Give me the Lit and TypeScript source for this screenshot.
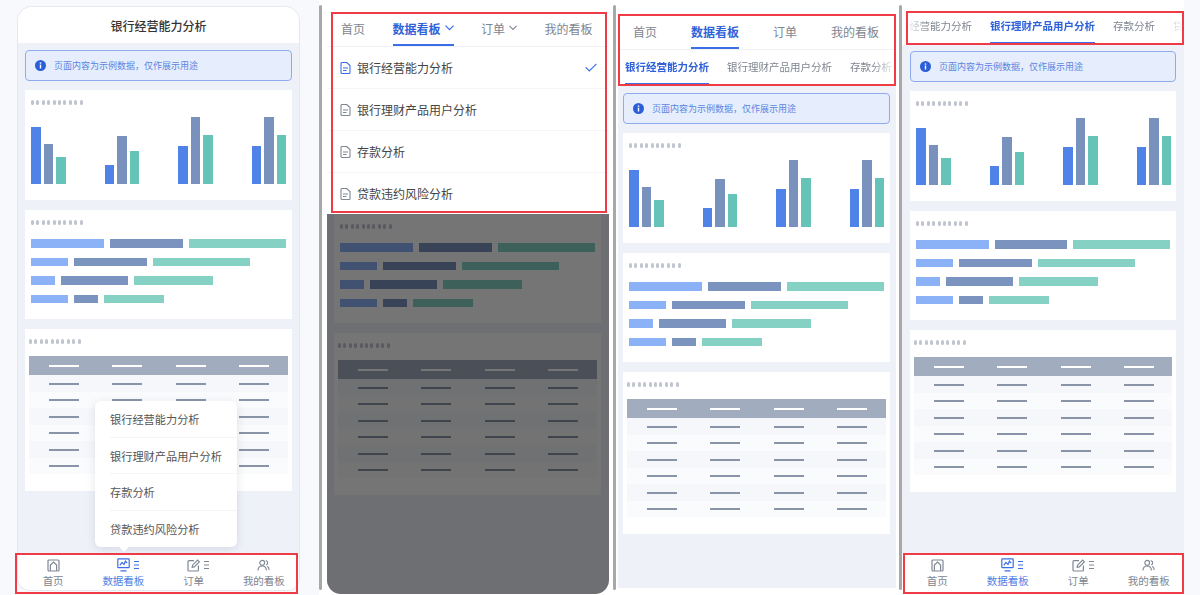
import { LitElement, html, css, svg } from "lit";
import { customElement } from "lit/decorators.js";

const GREY = "#7f8794";
const BLUE = "#3a6ee8";

const icons = {
  home: (c: string) => html`<svg width="13" height="13" viewBox="0 0 13 13" fill="none" stroke=${c} stroke-width="1.2"><rect x="1" y="1" width="11" height="11" rx="1"/><path d="M3.4 11.8V6L6.5 3l3.1 3v5.8"/></svg>`,
  data: (c: string) => html`<svg width="13" height="14" viewBox="0 0 13 14" fill="none" stroke=${c} stroke-width="1.2"><rect x=".8" y=".8" width="11.4" height="8.8" rx=".6"/><path d="M2.800 7.400l2.200-3 2 2 1.400-3.200 1.800 2"/><path d="M3.500 12.800h6"/></svg>`,
  edit: (c: string) => html`<svg width="13" height="13" viewBox="0 0 13 13" fill="none" stroke=${c} stroke-width="1.2"><path d="M7 1.600H2a1 1 0 0 0-1 1V11a1 1 0 0 0 1 1h8.400a1 1 0 0 0 1-1V6.400"/><path d="M5.200 8.200l.4-2L10.600 1.200l1.700 1.700-5 5z"/></svg>`,
  user: (c: string) => html`<svg width="14" height="13" viewBox="0 0 14 13" fill="none" stroke=${c} stroke-width="1.2"><circle cx="5.600" cy="3.600" r="2.600"/><path d="M1 11.800c.2-3 2.200-4.800 4.600-4.800s4.400 1.800 4.600 4.800"/><path d="M9.400 1.200c1.300.2 2.100 1.200 2.100 2.400 0 1.100-.6 2-1.600 2.300M11 7.400c1.200.7 2 2.200 2.100 4"/></svg>`,
  lines: (c: string) => html`<svg width="5" height="10" viewBox="0 0 5 10" stroke=${c} stroke-width="1"><path d="M0 1.500h5M0 5h5M0 8.500h5"/></svg>`,
  doc: (c: string) => html`<svg width="11" height="12" viewBox="0 0 11 12" fill="none" stroke=${c} stroke-width="1.100"><path d="M1 1.500a1 1 0 0 1 1-1h4.800L10 3.600V10.500a1 1 0 0 1-1 1H2a1 1 0 0 1-1-1z"/><path d="M3 6h5M3 8.500h3.500"/></svg>`,
  chevron: (c: string, w = 9) => html`<svg width=${w} height="6" viewBox="0 0 9 6" fill="none" stroke=${c} stroke-width="1.2"><path d="M.5.600l4 4 4-4"/></svg>`,
  check: (c: string) => html`<svg width="12" height="9" viewBox="0 0 12 9" fill="none" stroke=${c} stroke-width="1.100"><path d="M.6 4.200l3.700 3.700L11.400.8"/></svg>`,
  info: () => html`<svg width="11" height="11" viewBox="0 0 11 11">${svg`<circle cx="5.500" cy="5.500" r="5.500" fill="#2b5fd9"/><rect x="4.800" y="4.600" width="1.400" height="3.900" fill="#fff"/><circle cx="5.500" cy="3" r=".85" fill="#fff"/>`}</svg>`,
};

const GROUPS = [[57, 40, 27], [19, 48, 33], [38, 67, 49], [38, 67, 49]];
const ROWS = [[73, 73, 97], [36.5, 73, 97], [24, 67, 79], [36.5, 24, 60.5]];
const TABS = [
  { key: "home", label: "首页" },
  { key: "data", label: "数据看板", active: true, more: true },
  { key: "edit", label: "订单", more: true },
  { key: "user", label: "我的看板" },
];
const REPORTS = ["银行经营能力分析", "银行理财产品用户分析", "存款分析", "贷款违约风险分析"];
const RED = [
  [15, 553, 283, 41],
  [331, 12, 276, 201],
  [618, 14, 278, 72],
  [906, 11, 278, 34],
  [903, 553, 281, 41],
];

@customElement("app-root")
export class AppRoot extends LitElement {
  static styles = css`
    :host { display: block; position: relative; width: 1200px; height: 595px; overflow: hidden; background: #fff;
      font-family: "Noto Sans CJK SC", "Noto Sans", sans-serif; color: #333; }
    * { box-sizing: border-box; }
    .stage { display: flex; height: 595px; }
    .sep { width: 3px; height: 585px; margin-top: 5px; flex: none; background: #a8a8a8; border-radius: 2px; }
    .panel { flex: none; height: 595px; }
    .p1 { width: 319px; padding: 7px 0 0 18px; background: #f8f9fd; }
    .p2 { width: 291px; padding: 12px 0 0 5px; }
    .p3 { width: 283px; padding: 14px 0 0 2px; }
    .p4 { width: 298px; padding: 7px 0 0 0; background: linear-gradient(90deg, #fff 282px, #f8f9fd 282px); }
    .phone { position: relative; display: flex; flex-direction: column; overflow: hidden; background: #eef1f8; }
    .f1 { width: 281px; height: 583px; border-radius: 14px 14px 12px 12px; box-shadow: 0 0 0 1px #e6e8ef; }
    .f2 { width: 282px; height: 582px; border-radius: 0 0 14px 14px; }
    .f3 { width: 278px; height: 574px; }
    .f4 { width: 282px; height: 583px; border-radius: 14px 14px 12px 12px; }

    .title { height: 36px; flex: none; background: #fff; display: flex; align-items: center; justify-content: center;
      font-size: 12px; font-weight: 500; color: #333; }
    .content { flex: 1; display: flex; flex-direction: column; gap: 10px; padding: 7px 7px 0; min-height: 0; }
    .f3 .content { padding: 8px 6px 0 5px; }
    .f4 .content { padding: 6px 8px 0 8px; }
    .f2 .content { padding: 0 8px 0 7px; }
    .banner { height: 31px; flex: none; margin-bottom: -1px; display: flex; align-items: center; gap: 8px; padding-left: 9px;
      background: #e6eefd; border: 1px solid #8fabf0; border-radius: 4px; font-size: 9px; color: #5b84e0; }

    .card { flex: none; background: #fff; padding: 10px 6px 16px; }
    .dots { display: flex; gap: 2.4px; height: 5px; }
    .dots i { width: 3px; height: 5px; border-radius: 1.5px; background: #c1c5d0; }
    .chart { display: grid; grid-template-columns: repeat(4, 73.5px); height: 67px; margin-top: 12px; }
    .group { display: flex; align-items: flex-end; gap: 3px; }
    .group b { width: 9.5px; }
    .c0 { background: #4f83e8; }
    .c1 { background: #7892bd; }
    .c2 { background: #66c3b7; }
    .rows { display: flex; flex-direction: column; gap: 10.15px; margin-top: 14px; }
    .hrow { display: flex; gap: 6px; }
    .hrow b { height: 8.5px; }
    .h0 { background: #8bb1f6; }
    .h1 { background: #7b93bf; }
    .h2 { background: #85d2c5; }
    .tcard { padding: 10px 4px 17px; }
    .table { margin-top: 12px; }
    .tr { display: flex; height: 16.5px; padding-left: 20px; align-items: center; background: #fafbfd; }
    .tr:nth-child(even) { background: #f5f7fa; }
    .tr i { width: 30px; height: 2px; margin-right: 33.4px; background: #8a94a8; flex: none; }
    .tr.head { height: 19px; background: #a2acbf; }
    .tr.head i { background: #fff; }

    .bottom { flex: none; height: 37px; display: flex; background: #fff; }
    .tab { flex: 1; display: flex; flex-direction: column; align-items: center; font-size: 10.5px; color: #7e8590; line-height: 15px; padding-top: 4px; }
    .tab.on { color: #4f7fe6; }
    .tab .ic { position: relative; width: 13px; height: 16px; display: flex; align-items: center; }
    .tab .more { position: absolute; left: 17px; top: 3px; display: flex; }

    .pop { position: absolute; left: 77px; top: 394px; width: 142px; height: 146px; background: #fff; border-radius: 6px;
      box-shadow: 0 2px 10px rgba(60, 70, 100, .14); padding-left: 15px; font-size: 11.2px; color: #555; }
    .pop div { height: 36.5px; line-height: 36.5px; border-bottom: 1px solid #f3f4f6; }
    .pop div:last-of-type { border-bottom: 0; }
    .pop::after { content: ""; position: absolute; left: 25px; bottom: -3px; width: 8px; height: 8px; background: #fff; transform: rotate(45deg); }

    .nav { flex: none; display: flex; background: #fff; border-bottom: 1px solid #f1f2f5; font-size: 12px; color: #7e8590; white-space: nowrap; }
    .nav span { flex: none; display: flex; align-items: center; border-bottom: 2px solid transparent; }
    .nav span.on { color: #2f62d9; font-weight: 700; border-bottom-color: #3a6ee8; }
    .nav2 { height: 35px; padding-left: 14px; }
    .nav2 span { height: 34px; gap: 4px; margin-right: 27.5px; }
    .nav3 { height: 36px; padding-left: 15px; }
    .nav3 span { height: 35px; padding-top: 1px; margin-right: 34px; }
    .lower { position: relative; flex: 1; min-height: 0; }
    .shade { position: absolute; inset: 0; background: rgba(0, 0, 0, .54); }
    .list { flex: none; background: #fff; }
    .item { height: 42px; display: flex; align-items: center; gap: 6px; padding: 0 12px 0 13px; font-size: 12px; color: #444;
      border-bottom: 1px solid #f4f5f7; }
    .item:last-child { height: 41px; border-bottom: 0; }
    .item svg:last-child { margin-left: auto; }

    .strip { flex: none; display: flex; background: #fff; font-size: 10.5px; color: #7e8590; white-space: nowrap; overflow: hidden; }
    .strip span { flex: none; display: flex; align-items: center; border-bottom: 2px solid transparent; }
    .strip span.on { color: #2f62d9; font-weight: 700; border-bottom-color: #3a6ee8; }
    .track { display: flex; gap: 18px; flex: 1; overflow: hidden; }
    .s3 { height: 35px; padding-left: 7px; }
    .s3 span { height: 35px; }
    .s3 .track { -webkit-mask-image: linear-gradient(90deg, #000 calc(100% - 22px), transparent); mask-image: linear-gradient(90deg, #000 calc(100% - 22px), transparent); }
    .s4 { height: 38px; }
    .s4 .track { margin-left: 4px; -webkit-mask-image: linear-gradient(90deg, transparent, #000 24px, #000 calc(100% - 26px), transparent); mask-image: linear-gradient(90deg, transparent, #000 24px, #000 calc(100% - 26px), transparent); }
    .s4 .track span:first-child { margin-left: -18px; }
    .s4 span { height: 37px; padding-top: 2px; }

    .red { position: absolute; border: 2px solid #ee3b45; pointer-events: none; }
  `;

  private dots() {
    return html`<div class="dots">${Array.from({ length: 10 }, () => html`<i></i>`)}</div>`;
  }
  private banner() {
    return html`<div class="banner">${icons.info()}<span>页面内容为示例数据，仅作展示用途</span></div>`;
  }
  private barCard() {
    return html`<div class="card">${this.dots()}
      <div class="chart">${GROUPS.map((g) => html`<div class="group">${g.map((h, i) => html`<b class="c${i}" style="height:${h}px"></b>`)}</div>`)}</div>
    </div>`;
  }
  private rowCard() {
    return html`<div class="card">${this.dots()}
      <div class="rows">${ROWS.map((r) => html`<div class="hrow">${r.map((w, i) => html`<b class="h${i}" style="width:${w}px"></b>`)}</div>`)}</div>
    </div>`;
  }
  private tableCard() {
    const cells = html`<i></i><i></i><i></i><i></i>`;
    return html`<div class="card tcard">${this.dots()}
      <div class="table"><div class="tr head">${cells}</div>
      ${Array.from({ length: 6 }, () => html`<div class="tr">${cells}</div>`)}</div>
    </div>`;
  }
  private bottom() {
    return html`<div class="bottom">${TABS.map((t) => {
      const c = t.active ? BLUE : GREY;
      return html`<div class="tab ${t.active ? "on" : ""}">
        <div class="ic">${(icons as any)[t.key](c)}${t.more ? html`<span class="more">${icons.lines(c)}</span>` : ""}</div>
        ${t.label}</div>`;
    })}</div>`;
  }

  render() {
    return html`<div class="stage">
      <section class="panel p1">
        <div class="phone f1">
          <div class="title">银行经营能力分析</div>
          <div class="content">${this.banner()}${this.barCard()}${this.rowCard()}${this.tableCard()}</div>
          ${this.bottom()}
          <div class="pop">${REPORTS.map((r) => html`<div>${r}</div>`)}</div>
        </div>
      </section>
      <div class="sep"></div>
      <section class="panel p2">
        <div class="phone f2">
          <div class="nav nav2">
            <span>首页</span>
            <span class="on">数据看板${icons.chevron(BLUE)}</span>
            <span>订单${icons.chevron(GREY, 8)}</span>
            <span>我的看板</span>
          </div>
          <div class="list">${REPORTS.map((r, i) => html`<div class="item">${icons.doc(i === 0 ? BLUE : GREY)}<span>${r}</span>${i === 0 ? icons.check(BLUE) : ""}</div>`)}</div>
          <div class="lower">
            <div class="content">${this.rowCard()}${this.tableCard()}</div>
            <div class="shade"></div>
          </div>
        </div>
      </section>
      <div class="sep"></div>
      <section class="panel p3">
        <div class="phone f3">
          <div class="nav nav3">
            <span>首页</span><span class="on">数据看板</span><span>订单</span><span>我的看板</span>
          </div>
          <div class="strip s3"><div class="track">
            <span class="on">银行经营能力分析</span><span>银行理财产品用户分析</span><span>存款分析</span>
          </div></div>
          <div class="content">${this.banner()}${this.barCard()}${this.rowCard()}${this.tableCard()}</div>
        </div>
      </section>
      <div class="sep"></div>
      <section class="panel p4">
        <div class="phone f4">
          <div class="strip s4"><div class="track">
            <span>银行经营能力分析</span><span class="on">银行理财产品用户分析</span><span>存款分析</span><span>贷款违约风险分析</span>
          </div></div>
          <div class="content">${this.banner()}${this.barCard()}${this.rowCard()}${this.tableCard()}</div>
          ${this.bottom()}
        </div>
      </section>
    </div>
    ${RED.map(([x, y, w, h]) => html`<div class="red" style="left:${x}px;top:${y}px;width:${w}px;height:${h}px"></div>`)}`;
  }
}
